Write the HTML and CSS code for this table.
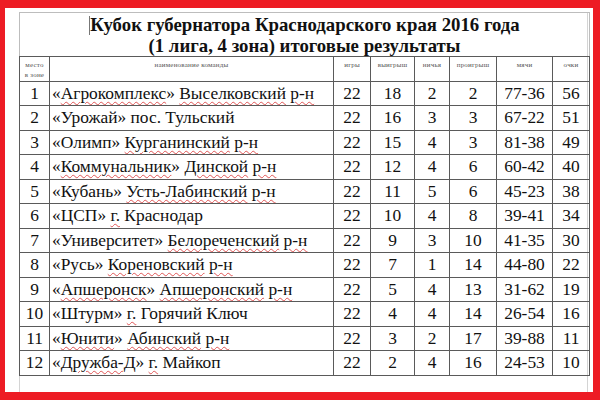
FILE: index.html
```html
<!DOCTYPE html>
<html lang="ru">
<head>
<meta charset="utf-8">
<title>Кубок губернатора Краснодарского края 2016 года</title>
<link rel="stylesheet" href="styles.css">
</head>
<body>
<div class="sheet">
  <div class="page">
    <table class="results">
      <colgroup>
        <col class="c-place"><col class="c-name"><col class="c-games"><col class="c-win"><col class="c-draw"><col class="c-loss"><col class="c-goals"><col class="c-pts">
      </colgroup>
      <tr class="title-row">
        <td colspan="8" class="title"><span class="caret"></span>Кубок губернатора Краснодарского края 2016 года<br>(1 лига, 4 зона) итоговые результаты</td>
      </tr>
      <tr class="head-row">
        <th>место<br>в зоне</th>
        <th>наименование команды</th>
        <th>игры</th>
        <th>выигрыш</th>
        <th>ничья</th>
        <th>проигрыш</th>
        <th>мячи</th>
        <th>очки</th>
      </tr>
      <tr><td>1</td><td class="name">«<u>Агрокомплекс</u>» <u>Выселковский</u> <u>р-н</u></td><td>22</td><td>18</td><td>2</td><td>2</td><td>77-36</td><td>56</td></tr>
      <tr><td>2</td><td class="name">«Урожай» пос. Тульский</td><td>22</td><td>16</td><td>3</td><td>3</td><td>67-22</td><td>51</td></tr>
      <tr><td>3</td><td class="name">«Олимп» <u>Курганинский</u> <u>р-н</u></td><td>22</td><td>15</td><td>4</td><td>3</td><td>81-38</td><td>49</td></tr>
      <tr><td>4</td><td class="name">«<u>Коммунальник</u>» <u>Динской</u> <u>р-н</u></td><td>22</td><td>12</td><td>4</td><td>6</td><td>60-42</td><td>40</td></tr>
      <tr><td>5</td><td class="name">«Кубань» <u>Усть-Лабинский</u> <u>р-н</u></td><td>22</td><td>11</td><td>5</td><td>6</td><td>45-23</td><td>38</td></tr>
      <tr><td>6</td><td class="name">«ЦСП» <u>г.</u> Краснодар</td><td>22</td><td>10</td><td>4</td><td>8</td><td>39-41</td><td>34</td></tr>
      <tr><td>7</td><td class="name">«Университет» <u>Белореченский</u> <u>р-н</u></td><td>22</td><td>9</td><td>3</td><td>10</td><td>41-35</td><td>30</td></tr>
      <tr><td>8</td><td class="name">«Русь» <u>Кореновский</u> <u>р-н</u></td><td>22</td><td>7</td><td>1</td><td>14</td><td>44-80</td><td>22</td></tr>
      <tr><td>9</td><td class="name">«<u>Апшеронск</u>» <u>Апшеронский</u> <u>р-н</u></td><td>22</td><td>5</td><td>4</td><td>13</td><td>31-62</td><td>19</td></tr>
      <tr><td>10</td><td class="name">«Штурм» <u>г.</u> Горячий Ключ</td><td>22</td><td>4</td><td>4</td><td>14</td><td>26-54</td><td>16</td></tr>
      <tr><td>11</td><td class="name">«<u>Юнити</u>» <u>Абинский</u> <u>р-н</u></td><td>22</td><td>3</td><td>2</td><td>17</td><td>39-88</td><td>11</td></tr>
      <tr><td>12</td><td class="name">«<u>Дружба-Д</u>» <u>г.</u> Майкоп</td><td>22</td><td>2</td><td>4</td><td>16</td><td>24-53</td><td>10</td></tr>
    </table>
  </div>
</div>
</body>
</html>
```

FILE: styles.css
```css
html, body {
  margin: 0;
  padding: 0;
}
body {
  width: 600px;
  height: 400px;
  box-sizing: border-box;
  background: #ed1c24;
  padding: 8px 7px 8px 5px;
  font-family: "Liberation Serif", "Times New Roman", serif;
  color: #111;
}
.sheet {
  background: #fff;
  height: 100%;
  box-sizing: border-box;
  padding: 4px 5px 0 13px;
}
.page {
  height: 100%;
  box-sizing: border-box;
  border-left: 1px solid #d4d4d4;
  border-right: 1px solid #d4d4d4;
  margin-left: 1px;
}
.results {
  width: 571px;
  margin-left: -1px;
  border-collapse: collapse;
  table-layout: fixed;
}
.c-place { width: 30px; }
.c-name { width: 284px; }
.c-games { width: 37px; }
.c-win { width: 44px; }
.c-draw { width: 35px; }
.c-loss { width: 47px; }
.c-goals { width: 56px; }
.c-pts { width: 37px; }

.results td, .results th {
  border: 1px solid #5a5a5a;
  padding: 0;
  text-align: center;
  font-size: 17.4px;
  font-weight: normal;
  white-space: nowrap;
  overflow: hidden;
}
.results tr {
  height: 24.5px;
}
.title-row {
  height: 42px;
}
.results td.title {
  border: 1px solid #bdbdbd;
  border-bottom-color: #5a5a5a;
  font-weight: bold;
  font-size: 18.8px;
  line-height: 21px;
  vertical-align: top;
  padding-top: 1px;
  color: #111;
}
.caret {
  display: inline-block;
  width: 1px;
  height: 19px;
  background: #777;
  vertical-align: -4px;
}
.head-row {
  height: 25px;
}
.results th {
  font-size: 7px;
  line-height: 10px;
  vertical-align: top;
  padding-top: 3px;
  color: #555;
  letter-spacing: 0.2px;
}
.results td.name {
  text-align: left;
  padding-left: 2px;
}
u {
  text-decoration: underline wavy #e05555;
  text-decoration-thickness: 1px;
  text-underline-offset: 2px;
}
```
